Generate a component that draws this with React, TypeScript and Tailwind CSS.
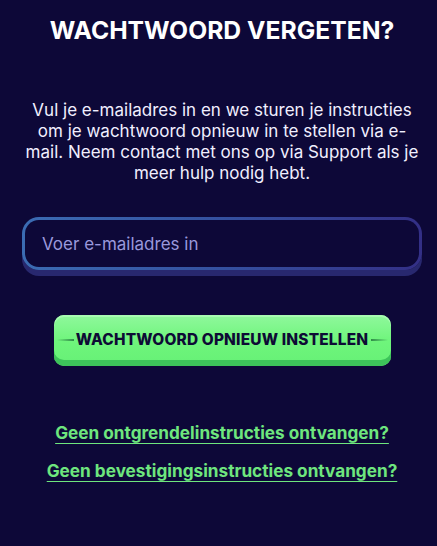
export default function App() {
  return (
    <div className="min-h-[546px] w-full bg-[#0d0838] pl-[22px] pr-[15px] pt-[14px] font-['Inter','Noto_Sans',sans-serif] text-white">
      {/* Heading */}
      <h1 className="text-center text-[24.7px] font-bold leading-[32px]">
        WACHTWOORD VERGETEN?
      </h1>

      <p className="mt-[54px] text-center text-[17px] leading-[21px] text-[#f1efff]">
        Vul je e-mailadres in en we sturen je instructies om je wachtwoord opnieuw in te stellen via e-mail. Neem contact met ons op via Support als je meer hulp nodig hebt.
      </p>

      {/* Email field */}
      <div className="mt-[33px] rounded-[17px] bg-gradient-to-r from-[#3b6cb3] via-[#34509f] to-[#332f86] p-[3px] shadow-[0_6px_0_#28286f]">
        <input
          type="email"
          placeholder="Voer e-mailadres in"
          className="h-[47px] w-full rounded-[14px] bg-[#0d0838] px-[17px] text-[17px] text-white outline-none placeholder:text-[#9a98dc]"
        />
      </div>

      {/* Submit button */}
      <div className="mt-[45px] flex justify-center">
        <button className="relative flex h-[51px] w-[337px] items-center justify-center rounded-[10px] bg-gradient-to-b from-[#8ff89c] via-[#6ff57c] to-[#66f076] pb-[2px] shadow-[inset_0_-6px_0_#3dc45a,inset_0_2px_0_#a8fbb2]">
          <span className="absolute left-[3px] top-[24px] h-[1.5px] w-[17px] bg-gradient-to-r from-transparent to-[#2f8a48]" />
          <span className="absolute right-[3px] top-[24px] h-[1.5px] w-[17px] bg-gradient-to-l from-transparent to-[#2f8a48]" />
          <span className="text-[15.4px] font-extrabold leading-none tracking-[0.2px] text-[#0e0b35]">
            WACHTWOORD OPNIEUW INSTELLEN
          </span>
        </button>
      </div>

      {/* Links */}
      <div className="mt-[55px] flex flex-col items-center gap-[15px]">
        <a href="#" className="text-[17.2px] font-bold leading-[23px] text-[#6ee67e] underline decoration-[1px] underline-offset-[4px]">
          Geen ontgrendelinstructies ontvangen?
        </a>
        <a href="#" className="text-[17.2px] font-bold leading-[23px] text-[#6ee67e] underline decoration-[1px] underline-offset-[4px]">
          Geen bevestigingsinstructies ontvangen?
        </a>
      </div>
    </div>
  );
}
